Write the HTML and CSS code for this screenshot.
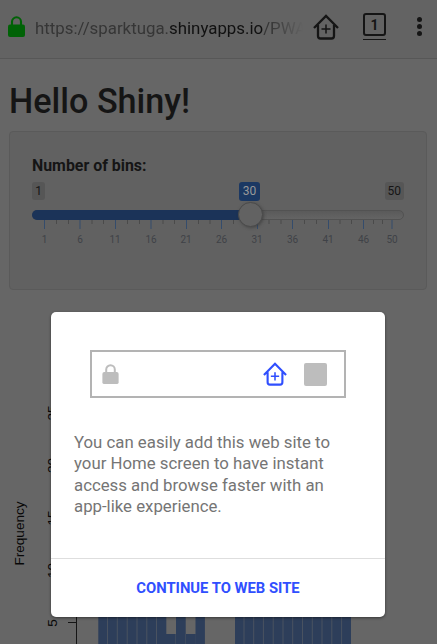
FILE: index.html
```
<!DOCTYPE html>
<html lang="en">
<head>
<meta charset="utf-8">
<title>Hello Shiny!</title>
<link rel="stylesheet" href="styles.css">
</head>
<body>
<svg class="defs" aria-hidden="true">
  <symbol id="lock" viewBox="0 0 17 22">
    <path d="M4 9V5.800a4.500 4.500 0 0 1 9 0V9" fill="none" stroke="currentColor" stroke-width="2.100"/>
    <rect x="0" y="8.500" width="17" height="12.500" rx="2" fill="currentColor"/>
  </symbol>
</svg>
<header class="toolbar">
  <svg class="secure"><use href="#lock"/></svg>
  <div class="address">https://sparktuga.<span class="domain">shinyapps.io</span>/PWA</div>
  <svg class="home" viewBox="0 0 26 26"><path d="M1 14 13 2l12 12M5 11v11q0 2.500 2.500 2.500h11q2.500 0 2.500-2.500V11" fill="none" stroke="currentColor" stroke-width="2.300"/><path d="M13 10.500v9M8.500 15h9" stroke="currentColor" stroke-width="1.500"/></svg>
  <div class="tabs"><span class="count">1</span></div>
  <div class="menu"><i></i><i></i><i></i></div>
</header>
<main class="page">
  <h1>Hello Shiny!</h1>
  <section class="well">
    <div class="label">Number of bins:</div>
    <div class="badges"><span>1</span><span class="value">30</span><span>50</span></div>
    <div class="track"><div class="fill"></div><div class="handle"></div></div>
    <svg class="scale" viewBox="32 220 374 30">
      <path class="minor" d="M56.500 220v4M68.500 220v4M92 220v4M103.500 220v4M127.500 220v4M139.500 220v4M163 220v4M174.500 220v4M198.500 220v4M210 220v4M233.500 220v4M245.500 220v4M269 220v4M281 220v4M304.500 220v4M316.500 220v4M340 220v4M351.500 220v4M373.500 220v4M382.500 220v4"/>
      <path class="major" d="M44.500 220v9M80 220v9M115.500 220v9M151 220v9M186.500 220v9M221.500 220v9M257.500 220v9M292.500 220v9M328.500 220v9M363.500 220v9M392 220v9"/>
      <g class="numbers"><text x="44.500" y="243">1</text><text x="80" y="243">6</text><text x="115" y="243">11</text><text x="151" y="243">16</text><text x="186" y="243">21</text><text x="221.500" y="243">26</text><text x="257" y="243">31</text><text x="292.500" y="243">36</text><text x="328" y="243">41</text><text x="363.500" y="243">46</text><text x="392" y="243">50</text></g>
    </svg>
  </section>
  <svg class="chart" viewBox="0 290 437 354">
    <g class="axis-text">
      <text transform="translate(24 533.500) rotate(-90)" text-anchor="middle">Frequency</text>
      <text transform="translate(57 413) rotate(-90)" text-anchor="middle">25</text>
      <text transform="translate(57 465.500) rotate(-90)" text-anchor="middle">20</text>
      <text transform="translate(57 518) rotate(-90)" text-anchor="middle">15</text>
      <text transform="translate(57 570.500) rotate(-90)" text-anchor="middle">10</text>
      <text transform="translate(57 623) rotate(-90)" text-anchor="middle">5</text>
    </g>
    <path class="axis" d="M76.500 412v232M68 412.500h8M68 465.500h8M68 517.500h8M68 570.500h8M68 622.500h8"/>
    <path class="bars" d="M98.300 600h68v44h-68zM166.300 634h9.400v10h-9.400zM176 600h9.700v44h-9.700zM186 634h9.400v10h-9.400zM195.500 600h9.400v44h-9.400zM235 600h116v44h-116z"/>
    <path class="gaps" d="M107.500 600v44M117.300 600v44M127.200 600v44M137 600v44M146.800 600v44M156.500 600v44M244 600v44M253.700 600v44M263.400 600v44M273.200 600v44M283 600v44M292.700 600v44M302.500 600v44M312.300 600v44M322 600v44M331.800 600v44M341.600 600v44"/>
  </svg>
</main>
<div class="dialog" role="dialog">
  <div class="illustration">
    <svg class="mini-lock"><use href="#lock"/></svg>
    <svg class="mini-home" viewBox="0 0 26 26"><path d="M1 14 13 2l12 12M5 11v11q0 2.500 2.500 2.500h11q2.500 0 2.500-2.500V11" fill="none" stroke="currentColor" stroke-width="2.300"/><path d="M13 11v9M8.500 15.500h9" stroke="currentColor" stroke-width="1.700"/></svg>
    <div class="mini-tab"></div>
  </div>
  <p>You can easily add this web site to<br>your Home screen to have instant<br>access and browse faster with an<br>app-like experience.</p>
  <div class="action">CONTINUE TO WEB SITE</div>
</div>
</body>
</html>
```
FILE: styles.css
```
* { box-sizing: border-box; }
html, body { margin: 0; height: 644px; overflow: hidden; }
body { background: #666; color: #151515; font-family: Roboto, sans-serif; position: relative; }
svg { display: block; flex: none; }
.defs { width: 0; height: 0; position: absolute; }
.toolbar { height: 59px; background: #636363; border-bottom: 1px solid #575757; display: flex; align-items: flex-start; padding-left: 8px; }
.secure { width: 17px; height: 22px; margin-top: 16px; color: #006206; }
.address { width: 277px; height: 30px; margin: 12.500px 0 0 10px; font-size: 16.850px; line-height: 30px; white-space: nowrap; color: #363636; -webkit-mask-image: linear-gradient(90deg, #000 235px, transparent 268px); mask-image: linear-gradient(90deg, #000 235px, transparent 268px); }
.domain { color: #111; }
.home { width: 26px; height: 26px; margin: 14px 0 0 1px; }
.tabs { width: 23px; height: 27px; margin: 13px 0 0 24px; border-bottom: 1.500px solid #151515; }
.count { display: block; height: 23px; border: 2px solid #151515; border-radius: 3px; text-align: center; font-size: 14px; line-height: 21px; font-weight: 700; }
.menu { display: flex; flex-direction: column; gap: 2px; margin: 17px 0 0 31px; }
.menu i { width: 5px; height: 5px; border-radius: 50%; background: #151515; }
h1 { margin: 20px 0 0 9px; height: 44px; line-height: 44px; font-size: 34.200px; font-weight: 500; white-space: nowrap; }
.well { margin: 8px 10px 0 9px; height: 159px; padding: 22.500px 22px 0 22px; border: 1px solid #5a5a5a; border-radius: 4px; background: #616161; }
.label { height: 22px; line-height: 22px; font-size: 15.900px; font-weight: 700; }
.badges { display: flex; margin-top: 5.500px; height: 19px; font-size: 12px; }
.badges span { height: 18px; line-height: 18px; padding: 0 3px; border-radius: 3px; background: #565656; min-width: 13px; text-align: center; }
.badges .value { width: 21px; height: 19px; line-height: 19px; margin-left: 194px; margin-right: auto; background: #1b3863; color: #999; }
.track { position: relative; height: 10px; margin-top: 9px; border: 1px solid #525252; border-radius: 5px; background: linear-gradient(#5a5a5a, #646464); }
.fill { width: 217px; height: 10px; margin: -1px; border-radius: 5px 0 0 5px; background: #1b3358; }
.handle { position: absolute; left: 205px; top: -9px; width: 25px; height: 25px; border: 1px solid #4a4a4a; border-radius: 50%; background: #626262; box-shadow: 1px 1px 3px #3338; }
.scale { width: 374px; height: 30px; }
.minor { stroke: #4a4a4a; }
.major { stroke: #344c6c; }
.numbers { fill: #3f4247; font-size: 10px; text-anchor: middle; }
.chart { width: 437px; height: 354px; }
.axis-text { fill: #080808; font: 13.600px "Liberation Sans", sans-serif; }
.axis { stroke: #151515; fill: none; }
.bars { fill: #2d3e5a; }
.gaps { stroke: #505862; stroke-width: .8; }
.dialog { position: absolute; left: 51px; top: 312px; width: 334px; height: 304.500px; padding-top: 38px; background: #fff; border-radius: 5px; box-shadow: 0 1px 3px #0007; }
.illustration { display: flex; width: 256px; height: 48px; margin-left: 39px; border: 2px solid #b3b3b3; }
.mini-lock { width: 17px; height: 21px; margin: 12px 0 0 10px; color: #bdbdbd; }
.mini-home { width: 24px; height: 24px; margin: 10px 0 0 143.500px; color: #304ffe; }
.mini-tab { width: 23px; height: 23px; margin: 10.500px 0 0 17.500px; border-radius: 2px; background: #bdbdbd; }
.dialog p { margin: 34px 0 0 23px; height: 126px; color: #757575; font-size: 16.800px; line-height: 21.400px; white-space: nowrap; }
.action { height: 58px; border-top: 1px solid #dedede; line-height: 59px; text-align: center; color: #304ffe; font-size: 14.800px; font-weight: 700; }
```
